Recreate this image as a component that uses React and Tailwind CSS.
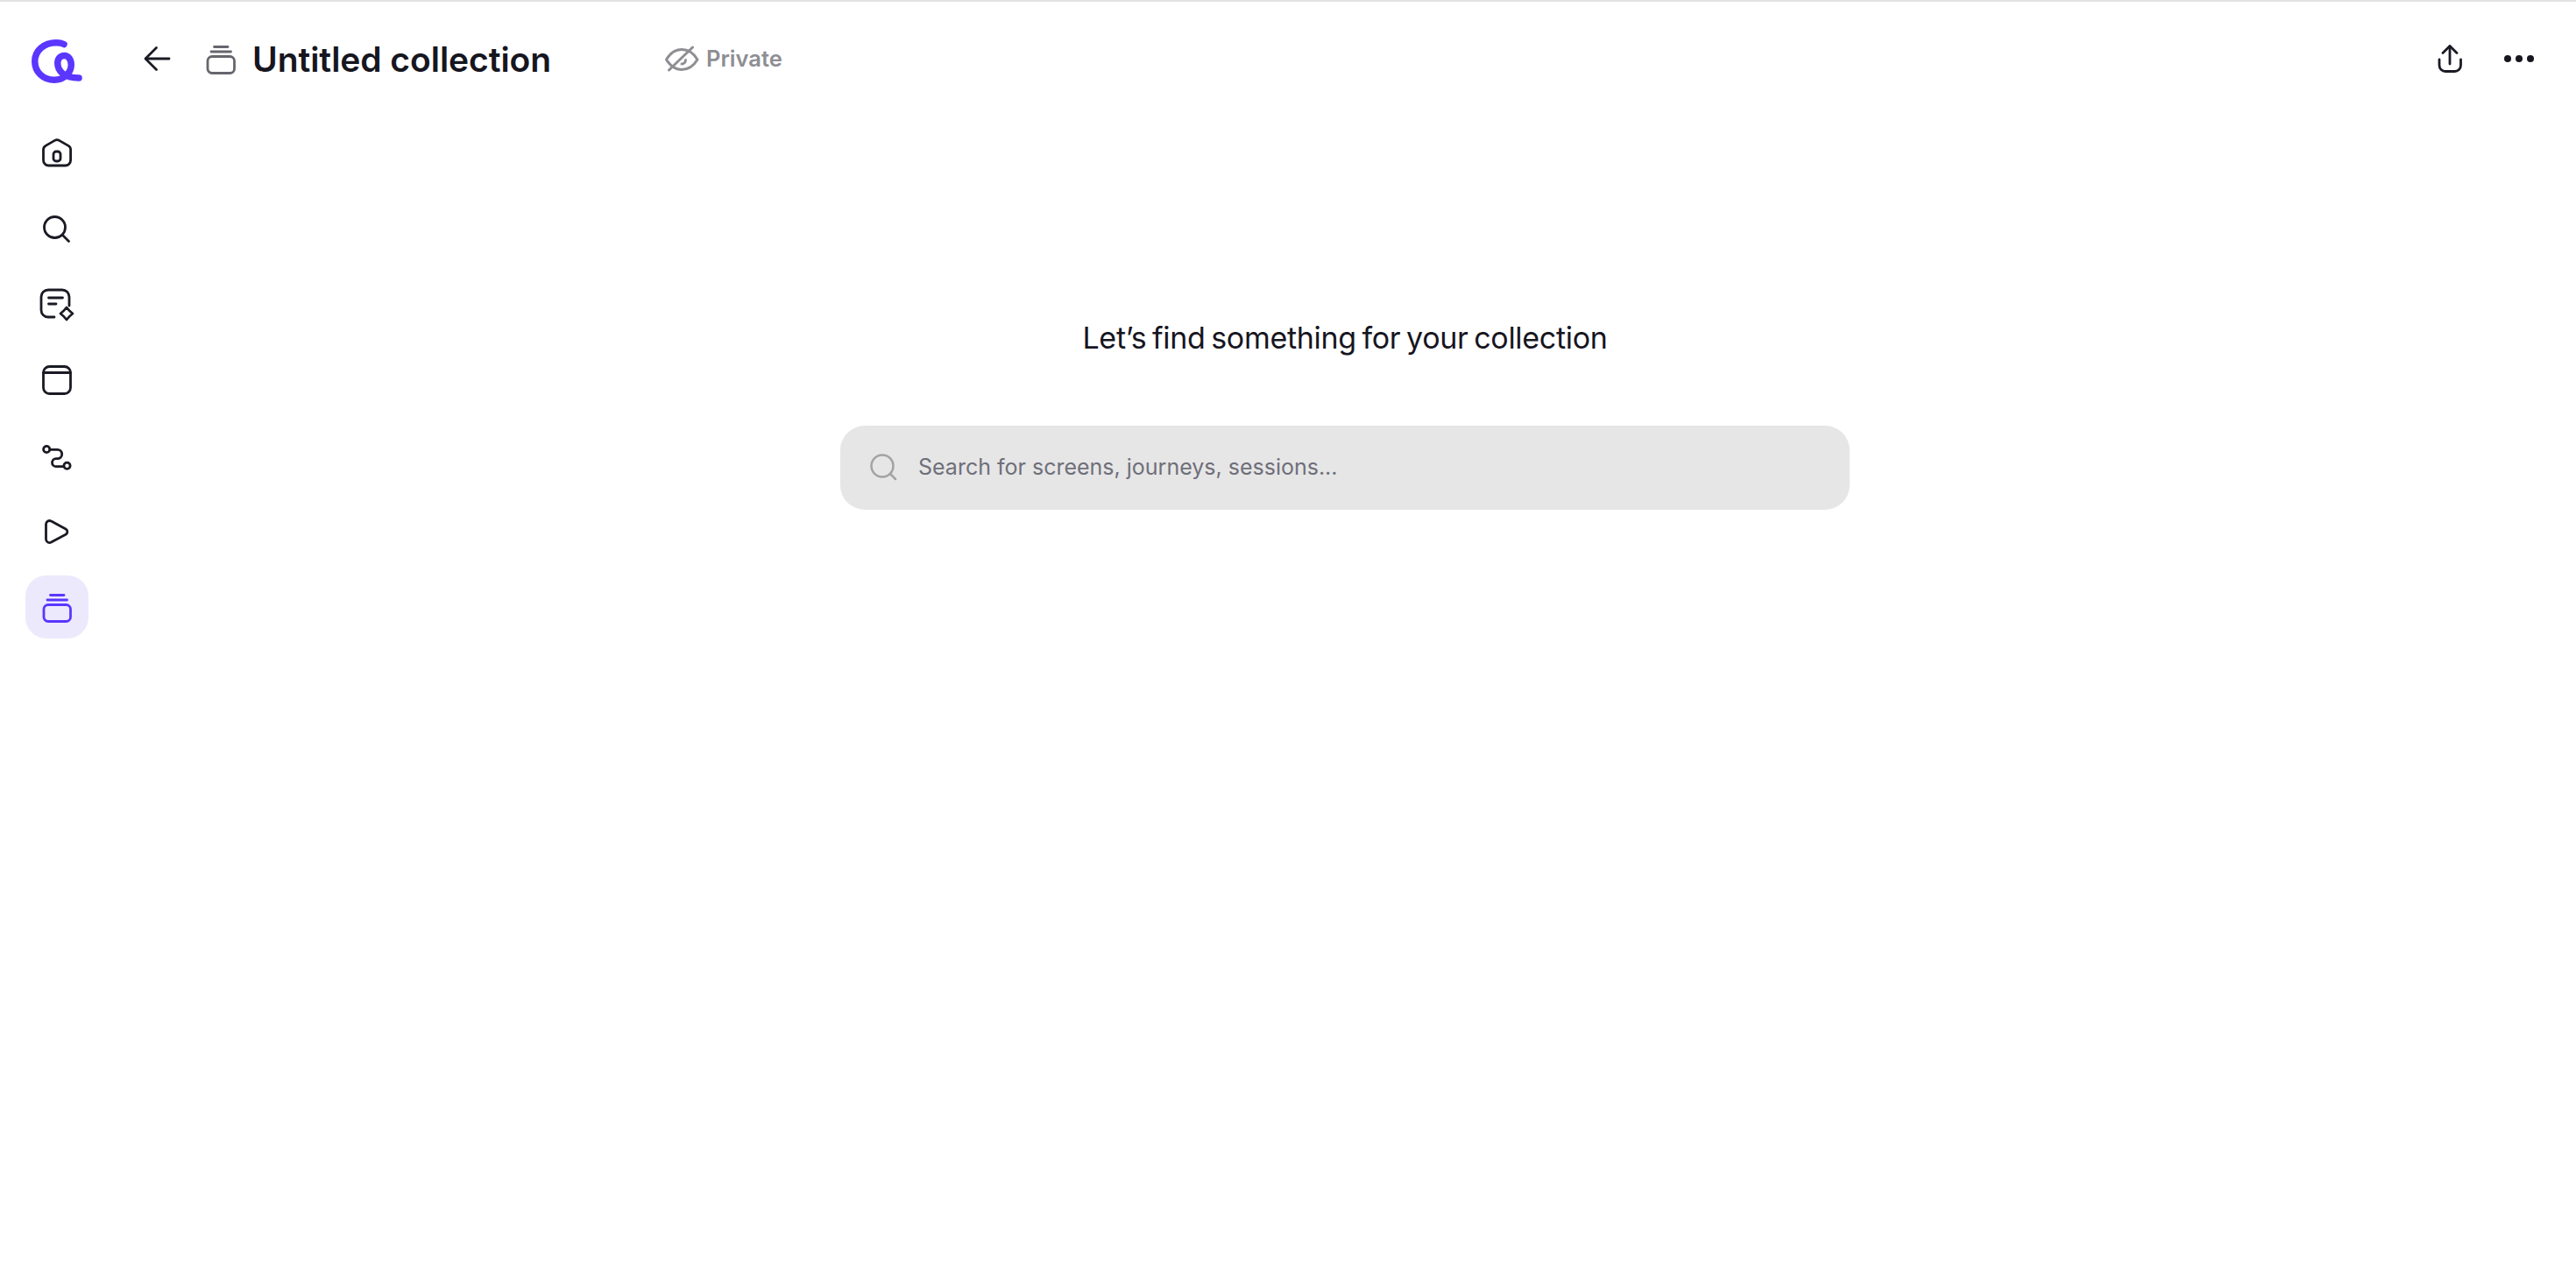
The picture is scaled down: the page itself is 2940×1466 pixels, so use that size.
import { useState } from "react";

const CollectionIcon = ({ className }) => (
  <svg viewBox="0 0 40 40" fill="none" stroke="currentColor" strokeWidth="2.800" strokeLinecap="round" strokeLinejoin="round" className={className}>
    <path d="M12.500 6.500H28" />
    <path d="M9 12H31.500" />
    <rect x="5" y="17.500" width="30.500" height="19" rx="5" />
  </svg>
);

const navIcons = [
  {
    id: "home",
    paths: (
      <>
        <path d="M17.500 4.400a5 5 0 0 1 5 0l10.500 6a5 5 0 0 1 2.600 4.300V27a6 6 0 0 1-6 6H10.500a6 6 0 0 1-6-6V14.700a5 5 0 0 1 2.600-4.300z" />
        <rect x="16" y="17" width="8" height="11" rx="3" />
      </>
    ),
  },
  {
    id: "search",
    paths: (
      <>
        <circle cx="17.500" cy="17.500" r="12" />
        <path d="M26.500 26.500L33.500 33.500" />
      </>
    ),
  },
  {
    id: "notes",
    paths: (
      <>
        <path d="M17 34H10a8 8 0 0 1-8-8V11a8 8 0 0 1 8-8h16a8 8 0 0 1 8 8v10" />
        <path d="M10.500 12H26.500" />
        <path d="M10.500 19H19" />
        <path d="M31 23Q34 27 38 30Q34 33 31 37Q28 33 24 30Q28 27 31 23z" />
      </>
    ),
  },
  {
    id: "screens",
    paths: (
      <>
        <rect x="4.500" y="3.500" width="31" height="31" rx="7" />
        <path d="M4.500 10.500H35.500" />
      </>
    ),
  },
  {
    id: "journeys",
    paths: (
      <>
        <circle cx="8.200" cy="12" r="3.600" />
        <circle cx="31.500" cy="30.700" r="3.600" />
        <path d="M12 12.300h8.500a5.200 5.200 0 0 1 0 10.400h-1.500a4.500 4.500 0 0 0 0 9h8.800" />
      </>
    ),
  },
  {
    id: "sessions",
    paths: (
      <path d="M7.500 11.500a4 4 0 0 1 6-3.400l16.500 8.900a3.500 3.500 0 0 1 0 6.200l-16.500 8.900a4 4 0 0 1-6-3.400z" />
    ),
  },
];

function NavItem({ children }) {
  return (
    <div className="w-[72px] h-[72px] flex items-center justify-center text-[#1a1a24]">
      <svg viewBox="0 0 40 40" fill="none" stroke="currentColor" strokeWidth="2.800" strokeLinecap="round" strokeLinejoin="round" className="w-10 h-10">
        {children}
      </svg>
    </div>
  );
}

const Logo = () => (
  <svg viewBox="0 0 60 56" fill="none" stroke="#5b36ff" strokeWidth="7.500" strokeLinecap="round" strokeLinejoin="round" className="w-[60px] h-[56px]">
    <path d="M38 8.500C35 7 32 6.750 29 6.750C15 6.750 4.750 16 4.750 28C4.750 40 14 49.250 27 49.250C38 49.250 46.250 41 46.250 32C46.250 26 43 21.500 38.500 21.500C34 21.500 30.750 25 30.750 30C30.750 39 38 47 55 47" />
  </svg>
);

export default function App() {
  const [query, setQuery] = useState("");

  return (
    <div className="h-screen flex bg-white border-t-2 border-[#e2e2e2] font-['Inter',sans-serif] overflow-hidden">
      <aside className="w-[130px] shrink-0 flex flex-col items-center">
        <div className="h-[138px] pt-[40px] flex justify-center">
          <Logo />
        </div>
        <div className="flex flex-col gap-[14.200px]">
          {navIcons.map((icon) => (
            <NavItem key={icon.id}>{icon.paths}</NavItem>
          ))}
          <div className="w-[72px] h-[72px] rounded-[24px] bg-[#ece9fd] flex items-center justify-center text-[#5b36ff]">
            <CollectionIcon className="w-10 h-10" />
          </div>
        </div>
      </aside>

      <main className="flex-1 flex flex-col min-w-0">
        <header className="h-[130px] flex items-center justify-between pl-[30px] pr-[48px]">
          <div className="flex items-center">
            <svg viewBox="0 0 40 40" fill="none" stroke="#1a1a24" strokeWidth="2.800" strokeLinecap="round" strokeLinejoin="round" className="w-10 h-10">
              <path d="M6.500 20H33" />
              <path d="M18.500 7.500L6 20L18.500 32.500" />
            </svg>
            <CollectionIcon className="w-10 h-10 ml-[32px] text-[#66666e]" />
            <h1 className="ml-[16px] w-[470px] text-[39px] leading-none font-semibold text-[#16161f] tracking-[-0.050px]">
              Untitled collection
            </h1>
            <div className="flex items-center gap-[8px] text-[#8e8e93]">
              <svg viewBox="0 0 40 40" fill="none" stroke="currentColor" strokeWidth="3" strokeLinecap="round" strokeLinejoin="round" className="w-10 h-10">
                <path d="M2.500 21C7 13.500 13 9.500 20 9.500C27 9.500 33.500 13.500 38 21C33.500 28.500 27 32.500 20 32.500C13 32.500 7 28.500 2.500 21z" />
                <path d="M5.500 33L32.500 7" />
                <path d="M24.500 21.500a4.500 4.500 0 0 1-4.500 4.500" />
              </svg>
              <span className="text-[25.500px] leading-none font-semibold">Private</span>
            </div>
          </div>
          <div className="flex items-center gap-[42px]">
            <svg viewBox="0 0 40 40" fill="none" stroke="#1a1a24" strokeWidth="2.800" strokeLinecap="round" strokeLinejoin="round" className="w-10 h-10">
              <path d="M20 6V26" />
              <path d="M12 13.500L20 5.500L28 13.500" />
              <path d="M8 21V27.500a7 7 0 0 0 7 7H25.500a7 7 0 0 0 7-7V21" />
            </svg>
            <div className="flex items-center gap-[5px]">
              <span className="w-2 h-2 rounded-full bg-[#16161f]" />
              <span className="w-2 h-2 rounded-full bg-[#16161f]" />
              <span className="w-2 h-2 rounded-full bg-[#16161f]" />
            </div>
          </div>
        </header>

        <section className="flex flex-col items-center pt-[230px]">
          <h2 className="text-[34px] leading-[48px] text-[#16161f] tracking-[-0.300px] [word-spacing:-2.600px]">
            Let’s find something for your collection
          </h2>
          <div className="mt-[76px] w-[1152px] h-24 rounded-[28px] bg-[#e6e6e6] flex items-center gap-[24px] pl-[33px]">
            <svg viewBox="0 0 32 32" fill="none" stroke="#a3a3a3" strokeWidth="2.500" strokeLinecap="round" className="w-8 h-8 shrink-0 -mt-[2px]">
              <circle cx="15" cy="15" r="12.500" />
              <path d="M24 24L30 30" />
            </svg>
            <input
              type="text"
              value={query}
              onChange={(e) => setQuery(e.target.value)}
              placeholder="Search for screens, journeys, sessions..."
              className="flex-1 bg-transparent outline-none text-[25px] text-[#16161f] placeholder:text-[#6f6f7a]"
            />
          </div>
        </section>
      </main>
    </div>
  );
}
